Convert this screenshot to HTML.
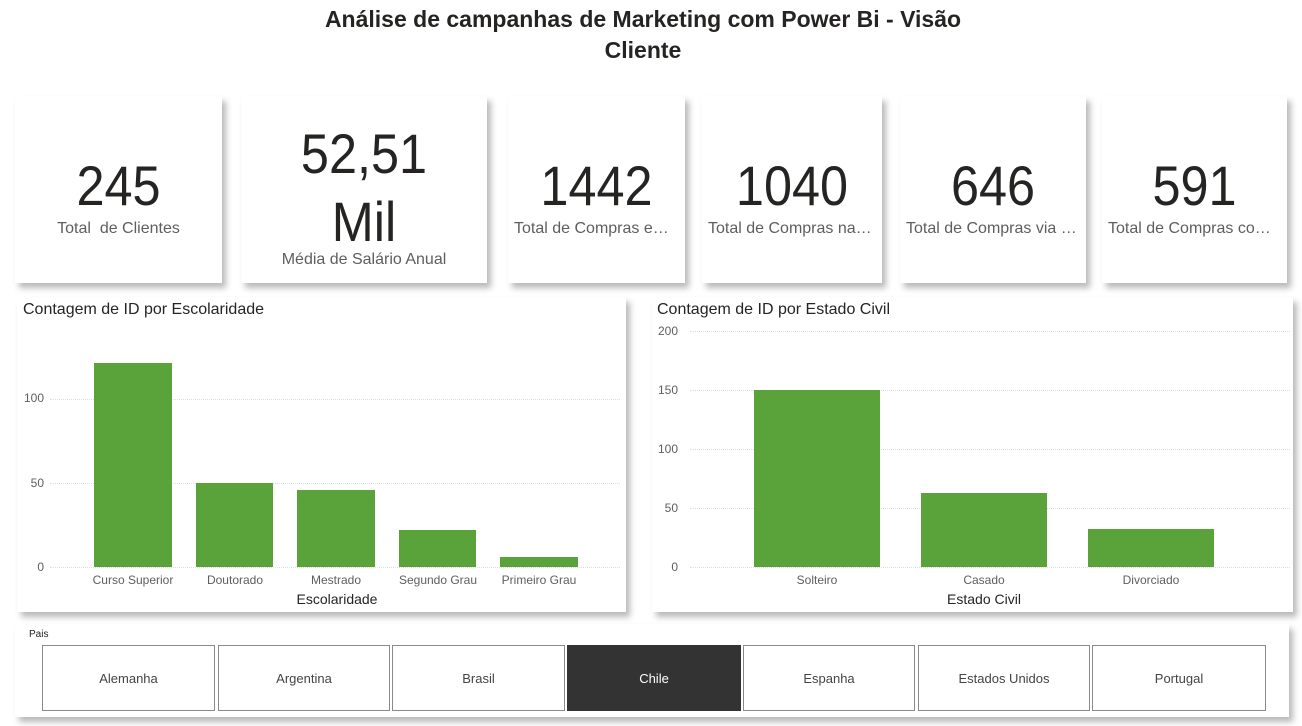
<!DOCTYPE html>
<html><head><meta charset="utf-8"><style>
*{margin:0;padding:0;box-sizing:border-box}
body{width:1302px;height:726px;background:#fff;position:relative;overflow:hidden;font-family:"Liberation Sans",sans-serif;color:#252423}
.a{position:absolute}
.card{position:absolute;background:#fff;box-shadow:4px 5px 6px rgba(0,0,0,.28)}
.num{position:absolute;left:0;right:0;text-align:center;font-family:"Liberation Sans",sans-serif;font-size:56px;color:#252423;line-height:1;transform:scaleX(.9)}
.lab{position:absolute;left:0;right:0;text-align:center;font-size:16px;color:#605e5c;white-space:nowrap;overflow:hidden;text-overflow:ellipsis;padding:0 6px}
.title{position:absolute;left:6px;top:4px;font-size:16px;color:#252423}
.bar{position:absolute;background:#5aa33b}
.yl{position:absolute;font-size:12px;color:#605e5c;text-align:right;width:30px}
.grid{position:absolute;border-top:1px dotted #ddd;height:0}
.xl{position:absolute;font-size:12px;color:#605e5c;text-align:center;width:110px}
.btn{position:absolute;top:645px;height:66px;border:1.5px solid #8a8a8a;background:#fff;font-size:13px;color:#444;display:flex;align-items:center;justify-content:center}
</style></head><body>
<div class="a" style="left:0;width:1302px;top:4px;text-align:center;font-size:23px;font-weight:bold;line-height:31px;padding-right:16px">Análise de campanhas de Marketing com Power Bi - Visão<br>Cliente</div>

<div class="card" style="left:15px;top:96px;width:207px;height:187px"><div class="num" style="top:62px">245</div><div class="lab" style="top:124px">Total&nbsp; de Clientes</div></div>
<div class="card" style="left:241px;top:96px;width:246px;height:187px"><div class="num" style="top:30px">52,51</div><div class="num" style="top:98px">Mil</div><div class="lab" style="top:155px">Média de Salário Anual</div></div>
<div class="card" style="left:508px;top:96px;width:177px;height:187px"><div class="num" style="top:62px">1442</div><div class="lab" style="top:124px">Total de Compras em Loja Física</div></div>
<div class="card" style="left:702px;top:96px;width:180px;height:187px"><div class="num" style="top:62px">1040</div><div class="lab" style="top:124px">Total de Compras na Web</div></div>
<div class="card" style="left:900px;top:96px;width:186px;height:187px"><div class="num" style="top:62px">646</div><div class="lab" style="top:124px">Total de Compras via Catálogo</div></div>
<div class="card" style="left:1102px;top:96px;width:185px;height:187px"><div class="num" style="top:62px">591</div><div class="lab" style="top:124px">Total de Compras com Desconto</div></div>

<div class="card" style="left:17px;top:297px;width:609px;height:315px"><div class="title">Contagem de ID por Escolaridade</div></div>
<div class="grid" style="left:50px;width:570px;top:399px"></div>
<div class="grid" style="left:50px;width:570px;top:483px"></div>
<div class="grid" style="left:50px;width:570px;top:567px"></div>
<div class="yl" style="left:14px;top:391px">100</div>
<div class="yl" style="left:14px;top:476px">50</div>
<div class="yl" style="left:14px;top:560px">0</div>
<div class="bar" style="left:94px;width:78px;top:363px;height:204px"></div>
<div class="bar" style="left:196px;width:77px;top:483px;height:84px"></div>
<div class="bar" style="left:297px;width:78px;top:490px;height:77px"></div>
<div class="bar" style="left:399px;width:77px;top:530px;height:37px"></div>
<div class="bar" style="left:500px;width:78px;top:557px;height:10px"></div>
<div class="xl" style="left:78px;top:573px">Curso Superior</div>
<div class="xl" style="left:180px;top:573px">Doutorado</div>
<div class="xl" style="left:281px;top:573px">Mestrado</div>
<div class="xl" style="left:383px;top:573px">Segundo Grau</div>
<div class="xl" style="left:484px;top:573px">Primeiro Grau</div>
<div class="a" style="left:237px;width:200px;text-align:center;top:591px;font-size:14px">Escolaridade</div>

<div class="card" style="left:652px;top:297px;width:641px;height:315px"><div class="title" style="left:5px">Contagem de ID por Estado Civil</div></div>
<div class="grid" style="left:690px;width:600px;top:331px"></div>
<div class="grid" style="left:690px;width:600px;top:390px"></div>
<div class="grid" style="left:690px;width:600px;top:449px"></div>
<div class="grid" style="left:690px;width:600px;top:508px"></div>
<div class="grid" style="left:690px;width:600px;top:567px"></div>
<div class="yl" style="left:648px;top:324px">200</div>
<div class="yl" style="left:648px;top:383px">150</div>
<div class="yl" style="left:648px;top:442px">100</div>
<div class="yl" style="left:648px;top:501px">50</div>
<div class="yl" style="left:648px;top:560px">0</div>
<div class="bar" style="left:754px;width:126px;top:390px;height:177px"></div>
<div class="bar" style="left:921px;width:126px;top:493px;height:74px"></div>
<div class="bar" style="left:1088px;width:126px;top:529px;height:38px"></div>
<div class="xl" style="left:762px;top:573px">Solteiro</div>
<div class="xl" style="left:929px;top:573px">Casado</div>
<div class="xl" style="left:1096px;top:573px">Divorciado</div>
<div class="a" style="left:884px;width:200px;text-align:center;top:591px;font-size:14px">Estado Civil</div>

<div class="card" style="left:15px;top:624px;width:1274px;height:93px"><div class="a" style="left:14px;top:5px;font-size:10px">Pais</div></div>
<div class="btn" style="left:42px;width:173px">Alemanha</div>
<div class="btn" style="left:218px;width:172px">Argentina</div>
<div class="btn" style="left:392px;width:173px">Brasil</div>
<div class="btn" style="left:567px;width:174px;background:#333;color:#fff;border-color:#333">Chile</div>
<div class="btn" style="left:743px;width:172px">Espanha</div>
<div class="btn" style="left:918px;width:172px">Estados Unidos</div>
<div class="btn" style="left:1092px;width:174px">Portugal</div>
</body></html>
